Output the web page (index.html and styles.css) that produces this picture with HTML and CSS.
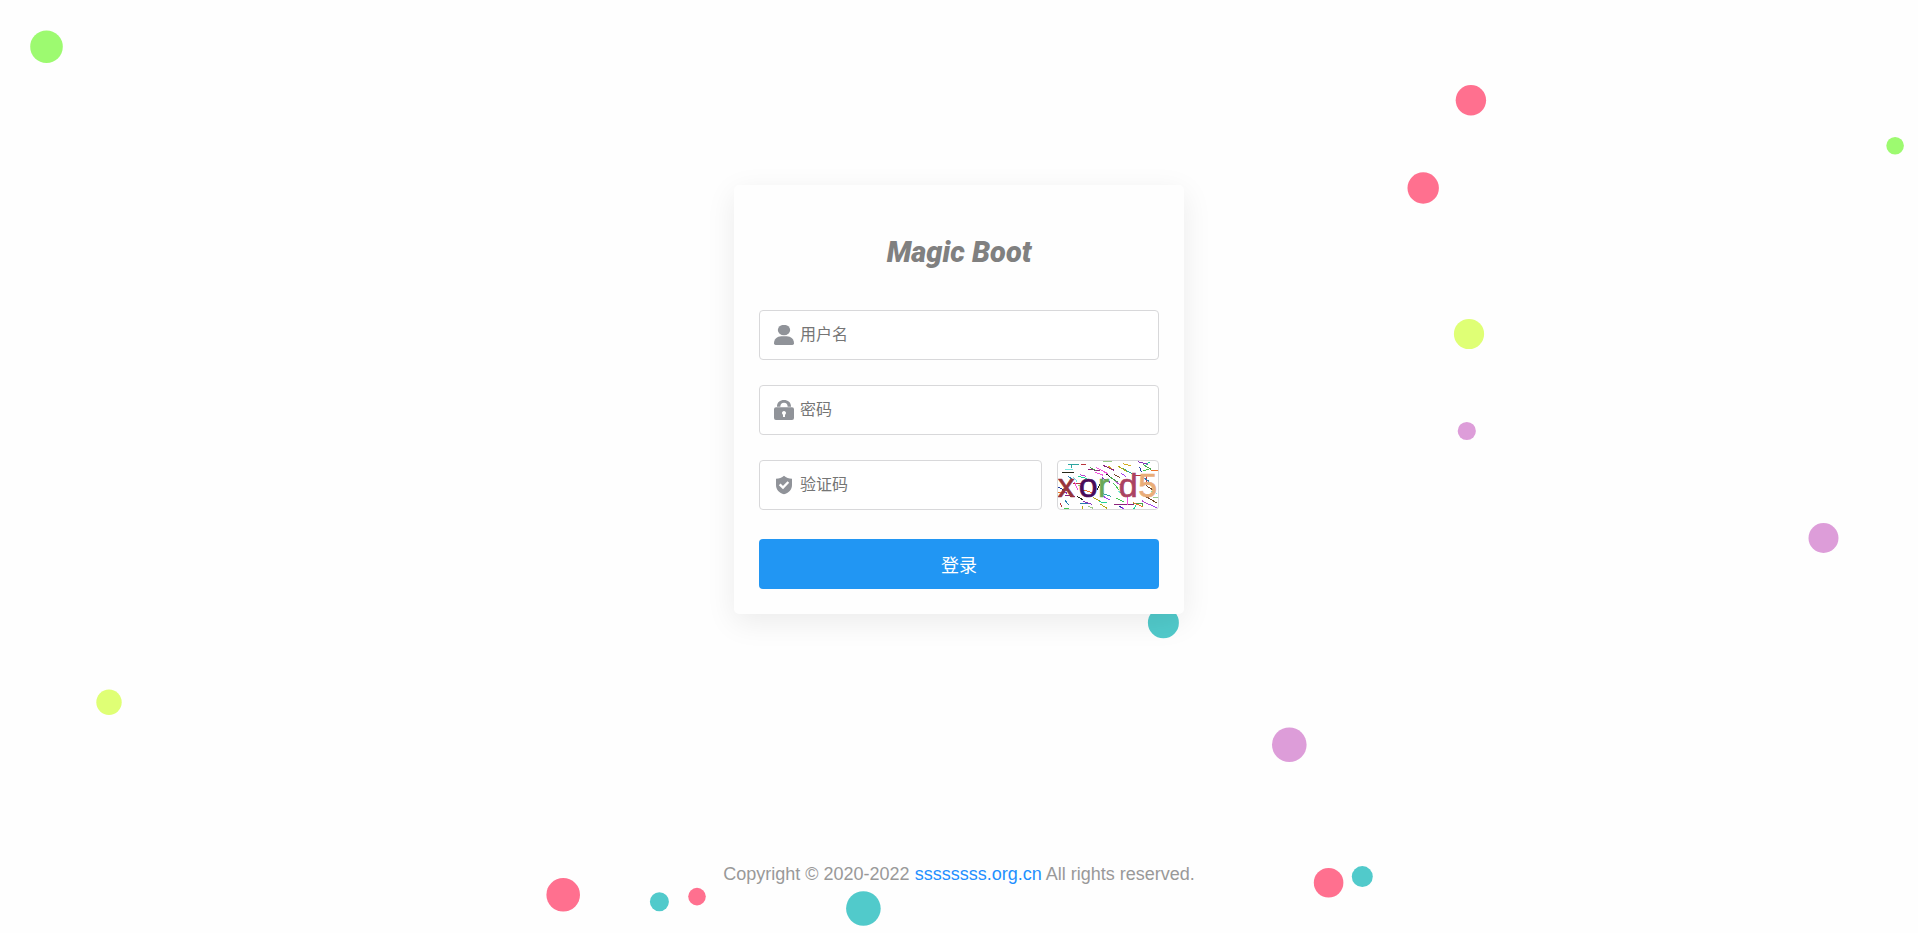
FILE: index.html
```html
<!DOCTYPE html>
<html lang="zh-CN">
<head>
<meta charset="utf-8">
<title>Magic Boot</title>
<link rel="stylesheet" href="styles.css">
</head>
<body>
<svg class="bubbles" viewBox="0 0 1918 933" preserveAspectRatio="xMidYMid slice" aria-hidden="true">
  <g class="green"><circle cx="46.5" cy="46.7" r="16.3"/><circle cx="1895.1" cy="145.7" r="8.8"/></g>
  <g class="pink"><circle cx="1470.9" cy="100.2" r="15.2"/><circle cx="1423.2" cy="188" r="15.7"/><circle cx="1328.6" cy="882.8" r="14.8"/><circle cx="563.2" cy="894.8" r="16.8"/><circle cx="697" cy="896.6" r="8.8"/></g>
  <g class="yellow"><circle cx="1469" cy="334" r="15.1"/><circle cx="109" cy="702.3" r="12.7"/></g>
  <g class="purple"><circle cx="1466.8" cy="431" r="9.1"/><circle cx="1823.5" cy="538" r="15"/><circle cx="1289.3" cy="744.8" r="17.3"/></g>
  <g class="teal"><circle cx="1163.4" cy="622.8" r="15.5"/><circle cx="1362.3" cy="876.6" r="10.5"/><circle cx="659.4" cy="901.8" r="9.5"/><circle cx="863.4" cy="908.5" r="17.3"/></g>
</svg>
<main class="page">
  <form class="card">
    <h1 class="title">Magic Boot</h1>
    <label class="field">
      <svg class="icon" viewBox="0 0 60 60" aria-hidden="true"><ellipse cx="30" cy="15" rx="18.5" ry="15.5"/><path d="M5 60Q0 60 0 55C0 43 9 34 22 34H38C51 34 60 43 60 55Q60 60 55 60Z"/></svg>
      <input class="input" type="text" placeholder="用户名" aria-label="用户名">
    </label>
    <label class="field">
      <svg class="icon" viewBox="0 0 60 60" aria-hidden="true"><path d="M9 20V19C9 7 18 0 30 0S51 7 51 19V20H41C41 12 37 8 30 8S19 12 19 20Z"/><path fill-rule="evenodd" d="M6 22H54Q60 22 60 28V54Q60 60 54 60H6Q0 60 0 54V28Q0 22 6 22ZM30 33C26 33 24 36 24 39C24 41 25 43 27 44V51H33V44C35 43 36 41 36 39C36 36 34 33 30 33Z"/></svg>
      <input class="input" type="password" placeholder="密码" aria-label="密码">
    </label>
    <div class="code-row">
      <label class="field">
        <svg class="icon" viewBox="0 0 60 60" aria-hidden="true"><path d="M30 2C36 8 45 10 54 11V30C54 44 44 54 30 58C16 54 6 44 6 30V11C15 10 24 8 30 2Z"/><path class="tick" d="M17 28L27 38L43 21"/></svg>
        <input class="input" type="text" placeholder="验证码" aria-label="验证码">
      </label>
      <button class="captcha" type="button" aria-label="验证码图片">
        <svg class="captcha-art" viewBox="1011 303 300 144" preserveAspectRatio="none">
          <g class="noise">
            <path stroke="#2ea5a0" d="M1041 314H1075M1051 314V324M1145 401L1170 409M1204 325L1232 340"/>
            <path stroke="#b9353d" d="M1079 313H1095M1057 371H1082M1240 346L1275 348M1275 348V367M1017 430L1022 440"/>
            <path stroke="#252719" d="M1023 337H1059M1137 372L1129 389M1157 342L1166 350M1067 409L1087 420"/>
            <path stroke="#76e8e3" d="M1032 328H1055M1190 392L1212 407M1058 352L1068 364M1291 394L1309 401"/>
            <path stroke="#8d247c" d="M1101 328L1136 332M1033 406L1062 410M1179 433H1240M1146 316L1180 331"/>
            <path stroke="#ef53db" d="M1124 322L1160 341M1122 337L1147 346M1061 367L1070 389M1220 411V435"/>
            <path stroke="#4ca44b" d="M1107 322L1124 331M1168 352L1192 367M1235 430H1265V441M1267 314L1290 328"/>
            <path stroke="#b2a813" d="M1191 318L1217 334M1116 412L1137 423M1083 438V447M1136 431L1158 445"/>
            <path stroke="#277bb1" d="M1078 430L1110 429M1031 419L1042 434M1265 351L1284 364M1041 348L1054 358"/>
            <path stroke="#8b30bd" d="M1143 353L1167 367M1086 424L1113 433M1250 305L1281 313M1023 389L1039 401"/>
            <path stroke="#48c750" d="M1028 445H1044M1186 414L1208 425M1265 331L1283 329M1178 370L1193 389"/>
            <path stroke="#ed762c" d="M1011 397H1031M1086 390L1118 399M1290 332H1311M1236 428L1265 440"/>
            <path stroke="#a23ced" d="M1147 409L1167 420M1199 339L1214 349M1194 440L1210 446M1288 434L1310 445"/>
            <path stroke="#9bc989" d="M1146 304H1172M1070 375L1087 383M1100 438L1117 445M1295 411H1311"/>
            <path stroke="#d3ae20" d="M1206 311L1230 318M1160 318L1174 326M1273 409L1301 425"/>
            <path stroke="#25d395" d="M1070 348L1098 356M1135 425L1158 429M1273 317L1285 306M1245 437L1238 447"/>
            <path stroke="#b84bce" d="M1077 344L1096 349M1181 364L1200 375M1263 422L1286 435"/>
            <path stroke="#744525" d="M1270 407L1308 429M1180 344L1197 352M1274 376L1298 391"/>
            <path stroke="#213da1" d="M1255 320L1262 337M1011 381L1028 390M1196 438L1204 445"/>
          </g>
          <text class="glyphs" y="412"><tspan x="1010" fill="#96333b" stroke="#96333b">x</tspan><tspan x="1073" fill="#480b58" stroke="#480b58">o</tspan><tspan x="1131" fill="#68a858" stroke="#68a858">r</tspan><tspan x="1193" fill="#ab4361" stroke="#ab4361">d</tspan><tspan x="1252" fill="#e9ad78" stroke="#e9ad78">5</tspan></text>
        </svg>
      </button>
    </div>
    <button class="submit" type="submit">登录</button>
  </form>
</main>
<footer class="footer">Copyright © 2020-2022 <a class="link" href="#">ssssssss.org.cn</a> All rights reserved.</footer>
</body>
</html>
```

FILE: styles.css
```css
* { box-sizing: border-box; }
body {
  margin: 0;
  min-height: 100vh;
  display: flex;
  flex-direction: column;
  background: #fefefe;
  font-family: "Liberation Sans", "Noto Sans CJK SC", sans-serif;
}
.bubbles { position: absolute; inset: 0; width: 100%; height: 100%; z-index: -1; }
.green { fill: #9dfa70; }
.pink { fill: #ff708f; }
.yellow { fill: #dfff75; }
.purple { fill: #dd9dd9; }
.teal { fill: #51cacb; }
.page { flex: 1; display: flex; align-items: center; justify-content: center; }
.card {
  width: 450px;
  max-width: 100%;
  padding: 25px;
  display: flex;
  flex-direction: column;
  gap: 25px;
  background: #fefefe;
  border-radius: 5px;
  box-shadow: 0 8px 30px rgba(0, 0, 0, .08);
}
.title {
  margin: 0;
  padding: 22px 0 13px;
  font: italic 900 29px/40px Roboto, sans-serif;
  color: #808080;
  text-align: center;
}
.field {
  flex: 1 1 auto;
  min-width: 0;
  height: 50px;
  padding: 0 14px;
  display: flex;
  align-items: center;
  gap: 6px;
  background: #fff;
  border: 1px solid #d8d8da;
  border-radius: 4px;
}
.icon { flex: none; width: 20px; height: 20px; fill: #909399; }
.tick { fill: none; stroke: #fff; stroke-width: 7; }
.input {
  flex: 1;
  min-width: 0;
  height: 46px;
  padding: 0;
  border: 0;
  outline: 0;
  background: none;
  font-family: inherit;
  font-size: 16px;
  color: #606266;
}
.input::placeholder { color: #757575; }
.code-row { display: flex; gap: 15px; }
.captcha {
  flex: none;
  width: 102px;
  height: 50px;
  padding: 0;
  overflow: hidden;
  background: #fff;
  border: 1px solid #d8d8da;
  border-radius: 4px;
}
.captcha-art { display: block; width: 100%; height: 100%; }
.noise { fill: none; stroke-width: 3; shape-rendering: crispEdges; }
.glyphs { font: 102px "Liberation Sans", sans-serif; stroke-width: 2; }
.submit {
  height: 50px;
  margin-top: 4px;
  padding: 0;
  border: 0;
  border-radius: 4px;
  background: #2196f3;
  color: #fff;
  font-family: inherit;
  font-size: 18px;
}
.footer {
  padding: 63px 16px 47px;
  font-size: 18px;
  line-height: 24px;
  text-align: center;
  color: #999;
}
.link { color: #1e90ff; text-decoration: none; }
```
